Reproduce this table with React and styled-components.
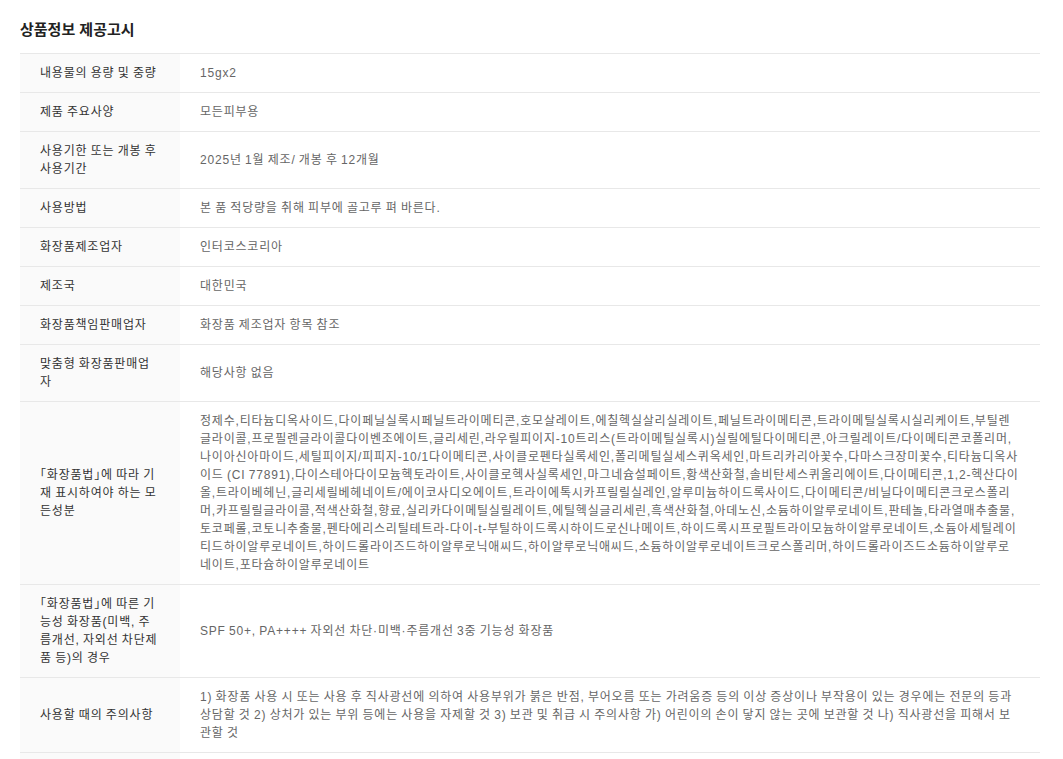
import React from "react";
import styled, { createGlobalStyle } from "styled-components";

const GlobalStyle = createGlobalStyle`
  html, body {
    margin: 0;
    padding: 0;
    background: #ffffff;
  }
  body {
    font-family: "Liberation Sans", "Noto Sans CJK KR", Arial, sans-serif;
    -webkit-font-smoothing: antialiased;
  }
`;

const Page = styled.section`
  padding: 20px 23px 0 20px;
  box-sizing: border-box;
  width: 1063px;
`;

const Title = styled.h2`
  margin: 0 0 13px;
  font-size: 15px;
  line-height: 20px;
  font-weight: 700;
  color: #222222;
`;

const Table = styled.table`
  width: 1020px;
  border-collapse: collapse;
  table-layout: fixed;
  font-size: 12px;
  line-height: 18px;
  letter-spacing: 0.8px;
  word-spacing: -0.8px;
  font-feature-settings: "halt";
`;

const Row = styled.tr`
  border-top: 1px solid #e8e8e8;
`;

const HeadCell = styled.th`
  width: 160px;
  box-sizing: border-box;
  padding: 10px 19px 10px 20px;
  background: #fafafa;
  color: #333333;
  font-weight: 400;
  text-align: left;
  vertical-align: middle;
`;

const ValueCell = styled.td`
  padding: 10px 20px;
  color: #666666;
  text-align: left;
  vertical-align: middle;
`;

const ingredients =
  "정제수,티타늄디옥사이드,다이페닐실록시페닐트라이메티콘,호모살레이트,에칠헥실살리실레이트,페닐트라이메티콘,트라이메틸실록시실리케이트,부틸렌" +
  "글라이콜,프로필렌글라이콜다이벤조에이트,글리세린,라우릴피이지-10트리스(트라이메틸실록시)실릴에틸다이메티콘,아크릴레이트/다이메티콘코폴리머," +
  "나이아신아마이드,세틸피이지/피피지-10/1다이메티콘,사이클로펜타실록세인,폴리메틸실세스퀴옥세인,마트리카리아꽃수,다마스크장미꽃수,티타늄디옥사" +
  "이드 (CI 77891),다이스테아다이모늄헥토라이트,사이클로헥사실록세인,마그네슘설페이트,황색산화철,솔비탄세스퀴올리에이트,다이메티콘,1,2-헥산다이" +
  "올,트라이베헤닌,글리세릴베헤네이트/에이코사디오에이트,트라이에톡시카프릴릴실레인,알루미늄하이드록사이드,다이메티콘/비닐다이메티콘크로스폴리" +
  "머,카프릴릴글라이콜,적색산화철,향료,실리카다이메틸실릴레이트,에틸헥실글리세린,흑색산화철,아데노신,소듐하이알루로네이트,판테놀,타라열매추출물," +
  "토코페롤,코토니추출물,펜타에리스리틸테트라-다이-t-부틸하이드록시하이드로신나메이트,하이드록시프로필트라이모늄하이알루로네이트,소듐아세틸레" +
  "이티드하이알루로네이트,하이드롤라이즈드하이알루로닉애씨드,하이알루로닉애씨드,소듐하이알루로네이트크로스폴리머,하이드롤라이즈드소듐하이알루" +
  "로네이트,포타슘하이알루로네이트";

const rows = [
  ["내용물의 용량 및 중량", "15gx2"],
  ["제품 주요사양", "모든피부용"],
  ["사용기한 또는 개봉 후 사용기간", "2025년 1월 제조/ 개봉 후 12개월"],
  ["사용방법", "본 품 적당량을 취해 피부에 골고루 펴 바른다."],
  ["화장품제조업자", "인터코스코리아"],
  ["제조국", "대한민국"],
  ["화장품책임판매업자", "화장품 제조업자 항목 참조"],
  ["맞춤형 화장품판매업자", "해당사항 없음"],
  ["「화장품법」에 따라 기재 표시하여야 하는 모든성분", ingredients],
  [
    "「화장품법」에 따른 기능성 화장품(미백, 주름개선, 자외선 차단제품 등)의 경우",
    "SPF 50+, PA++++ 자외선 차단·미백·주름개선 3중 기능성 화장품",
  ],
  [
    "사용할 때의 주의사항",
    "1) 화장품 사용 시 또는 사용 후 직사광선에 의하여 사용부위가 붉은 반점, 부어오름 또는 가려움증 등의 이상 증상이나 부작용이 있는 경우에는 전문의 등과 상담할 것 2) 상처가 있는 부위 등에는 사용을 자제할 것 3) 보관 및 취급 시 주의사항 가) 어린이의 손이 닿지 않는 곳에 보관할 것 나) 직사광선을 피해서 보관할 것",
  ],
  [
    "품질보증기준",
    "본 제품에 이상이 있을 경우 공정거래위원회 고시 「소비자분쟁해결기준」에 의해 보상받을 수 있습니다.",
  ],
];

export default function App() {
  return (
    <>
      <GlobalStyle />
      <Page>
        <Title>상품정보 제공고시</Title>
        <Table>
          <tbody>
            {rows.map(([head, value]) => (
              <Row key={head}>
                <HeadCell scope="row">{head}</HeadCell>
                <ValueCell>{value}</ValueCell>
              </Row>
            ))}
          </tbody>
        </Table>
      </Page>
    </>
  );
}
